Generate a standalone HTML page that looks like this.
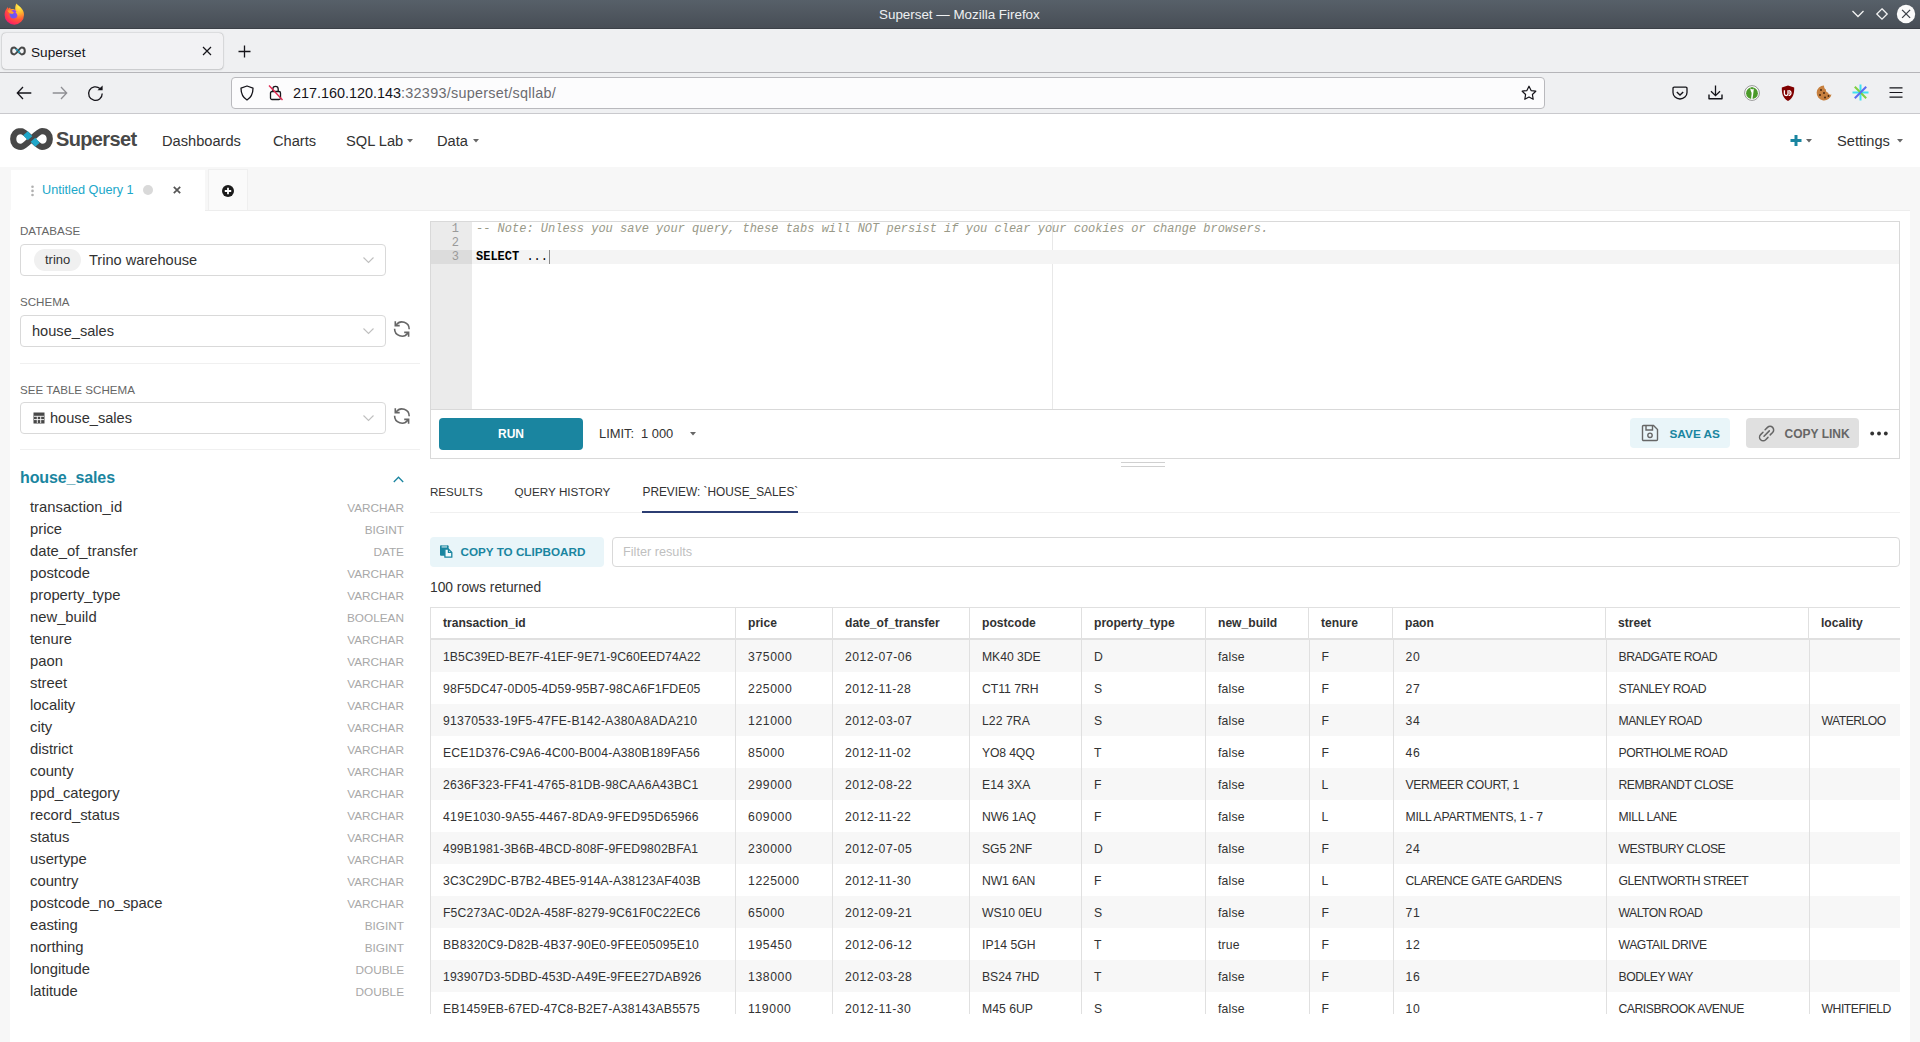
<!DOCTYPE html>
<html><head><meta charset="utf-8">
<style>
*{box-sizing:border-box;margin:0;padding:0}
html,body{width:1920px;height:1042px;overflow:hidden;background:#f7f7f7;font-family:"Liberation Sans",sans-serif;color:#323232}
.a{position:absolute}
.t{white-space:nowrap;line-height:1}
svg{overflow:visible}
</style></head><body>
<div class="a" style="left:0px;top:0px;width:1920px;height:29px;background:linear-gradient(#576069,#474d55)"></div><div class="a" style="left:0px;top:28px;width:1920px;height:1px;background:#3b4047"></div><div class="a t" style="left:879px;top:8.15px;font-size:13.4px;color:#eef0f2;font-weight:normal;">Superset — Mozilla Firefox</div><svg class="a" style="left:3px;top:2px" width="22" height="22" viewBox="0 0 22 22">
<defs>
<radialGradient id="ffg" cx="0.75" cy="0.15" r="1"><stop offset="0" stop-color="#fff44f"/><stop offset="0.3" stop-color="#ffb62e"/><stop offset="0.6" stop-color="#ff5a36"/><stop offset="0.85" stop-color="#ff2a5a"/><stop offset="1" stop-color="#e31587"/></radialGradient>
<radialGradient id="ffp" cx="0.35" cy="0.7" r="0.8"><stop offset="0" stop-color="#5b5ff0"/><stop offset="1" stop-color="#a03cf5"/></radialGradient>
</defs>
<path d="M13.3 1.6 C15 3.5 17.2 4.6 19 7 C20.6 9 21 11 21 13 A9.7 9.7 0 0 1 1.6 13 C1.6 10.5 2.3 8.5 3.6 6.8 L4.6 5 L5.4 6.8 L7 5.6 L7.8 7.2 C9.5 6.8 11 7.2 12.3 8 C12 5.5 12.4 3.5 13.3 1.6 Z" fill="url(#ffg)"/>
<circle cx="10.7" cy="12.2" r="4.2" fill="url(#ffp)"/>
<path d="M4.2 8.6 L7.8 8.2 L11 10.4 L9.5 12 L6.5 11.2 Z" fill="#ffa02e"/>
<path d="M14 8.5 C15.5 10 15.8 12.5 15 14.5 C14.5 12.5 13.5 11 12.5 10.5 Z" fill="#ffbd2e"/>
</svg><svg class="a" style="left:1852px;top:10px" width="12" height="8" viewBox="0 0 12 8"><path d="M0.5 1 L6 6.5 L11.5 1" fill="none" stroke="#f2f2f2" stroke-width="1.3"/></svg><svg class="a" style="left:1876px;top:8px" width="12" height="12" viewBox="0 0 12 12"><path d="M6 0.8 L11.2 6 L6 11.2 L0.8 6 Z" fill="none" stroke="#f2f2f2" stroke-width="1.3"/></svg><svg class="a" style="left:1896px;top:4px" width="20" height="20" viewBox="0 0 20 20"><circle cx="10" cy="10" r="9.2" fill="#fafafa"/><path d="M6.1 5.9 L14.1 13.9 M14.1 5.9 L6.1 13.9" stroke="#3b4047" stroke-width="1.3"/></svg><div class="a" style="left:0px;top:29px;width:1920px;height:43px;background:#eff0f2"></div><div class="a" style="left:0px;top:72px;width:1920px;height:1px;background:#b5b5b9"></div><div class="a" style="left:2px;top:33px;width:221px;height:36px;background:#f2f2f4;border-radius:4px;box-shadow:0 0 1.5px rgba(0,0,0,.4),0 1px 2px rgba(0,0,0,.1)"></div><svg class="a" style="left:10px;top:46px" width="16" height="10" viewBox="0 0 16 10"><path d="M4.2 1.6 C2 1.6 1.2 3.3 1.2 5 C1.2 6.7 2 8.4 4.2 8.4 C6.6 8.4 9.4 1.6 11.8 1.6 C14 1.6 14.8 3.3 14.8 5 C14.8 6.7 14 8.4 11.8 8.4 C9.4 8.4 6.6 1.6 4.2 1.6 Z" fill="none" stroke="#484848" stroke-width="2"/><path d="M6.2 3.1 L7.6 4.6" stroke="#20a7c9" stroke-width="2"/><path d="M8.4 5.4 L9.8 6.9" stroke="#20a7c9" stroke-width="2"/></svg><div class="a t" style="left:31px;top:45.78px;font-size:13.6px;color:#15141a;font-weight:normal;">Superset</div><svg class="a" style="left:202px;top:46px" width="10" height="10" viewBox="0 0 10 10"><path d="M1 1 L9 9 M9 1 L1 9" stroke="#15141a" stroke-width="1.2"/></svg><svg class="a" style="left:238px;top:45px" width="13" height="13" viewBox="0 0 13 13"><path d="M6.5 0.5 V12.5 M0.5 6.5 H12.5" stroke="#15141a" stroke-width="1.3"/></svg><div class="a" style="left:0px;top:73px;width:1920px;height:40px;background:#eff0f2"></div><div class="a" style="left:0px;top:113px;width:1920px;height:1px;background:#c9c9cd"></div><svg class="a" style="left:16px;top:86px" width="16" height="14" viewBox="0 0 16 14"><path d="M7 1 L1.3 7 L7 13 M1.3 7 H15.3" fill="none" stroke="#15141a" stroke-width="1.3"/></svg><svg class="a" style="left:52px;top:86px" width="16" height="14" viewBox="0 0 16 14"><path d="M9 1 L14.7 7 L9 13 M14.7 7 H0.7" fill="none" stroke="#8f8f94" stroke-width="1.3"/></svg><svg class="a" style="left:88px;top:86px" width="16" height="16" viewBox="0 0 16 16"><path d="M14.2 7.5 A6.8 6.8 0 1 1 12 2.6" fill="none" stroke="#15141a" stroke-width="1.3"/><path d="M9.5 4.3 L14.6 4.3 L14.6 -0.6 Z" fill="#15141a"/></svg><div class="a" style="left:231px;top:77px;width:1314px;height:32px;background:#fcfcfd;border:1px solid #b9b9bd;border-radius:4px"></div><svg class="a" style="left:240px;top:85px" width="14" height="16" viewBox="0 0 14 16"><path d="M7 1 L13 3.2 C13 9 11 12.5 7 15 C3 12.5 1 9 1 3.2 Z" fill="none" stroke="#15141a" stroke-width="1.3" stroke-linejoin="round"/></svg><svg class="a" style="left:268px;top:84px" width="16" height="17" viewBox="0 0 16 17"><rect x="2.5" y="7.5" width="10" height="8" rx="1.5" fill="none" stroke="#15141a" stroke-width="1.3"/><path d="M4.8 7.5 V5 A2.7 2.7 0 0 1 10.2 5 V7.5" fill="none" stroke="#15141a" stroke-width="1.3"/><path d="M1 1.5 L14.5 16" stroke="#e22850" stroke-width="1.4"/></svg><div class="a t" style="left:293px;top:86.01px;font-size:14.4px;color:#15141a;font-weight:normal;">217.160.120.143<span style="color:#6b6b70;letter-spacing:0.27px">:32393/superset/sqllab/</span></div><svg class="a" style="left:1521px;top:85px" width="16" height="16" viewBox="0 0 16 16"><path d="M8 1.2 L10.1 5.6 L14.8 6.2 L11.4 9.5 L12.2 14.3 L8 12 L3.8 14.3 L4.6 9.5 L1.2 6.2 L5.9 5.6 Z" fill="none" stroke="#15141a" stroke-width="1.2" stroke-linejoin="round"/></svg><svg class="a" style="left:1672px;top:86px" width="16" height="15" viewBox="0 0 16 15"><path d="M2.2 1.2 H13.8 A1.2 1.2 0 0 1 15 2.4 V6.5 A7 6.5 0 0 1 1 6.5 V2.4 A1.2 1.2 0 0 1 2.2 1.2 Z" fill="none" stroke="#15141a" stroke-width="1.3"/><path d="M4.8 6 L8 9 L11.2 6" fill="none" stroke="#15141a" stroke-width="1.4"/></svg><svg class="a" style="left:1708px;top:85px" width="15" height="15" viewBox="0 0 15 15"><path d="M7.5 0.5 V10.5 M3 6.2 L7.5 10.7 L12 6.2" fill="none" stroke="#15141a" stroke-width="1.3"/><path d="M1 9.5 V13.8 H14 V9.5" fill="none" stroke="#15141a" stroke-width="1.4" stroke-linejoin="round"/></svg><svg class="a" style="left:1744px;top:85px" width="16" height="16" viewBox="0 0 16 16"><circle cx="8" cy="8" r="7.4" fill="#fff" stroke="#8a8a8a" stroke-width="0.9"/><circle cx="8" cy="8.2" r="5.9" fill="#4b9a2a"/><path d="M6.2 3.2 C6.6 6 7.2 6.8 7.6 7.8 C7.8 9.5 7 12 7.2 14.2 H8.6 C8.6 12 9.2 10 9.2 9 C9.4 7.5 9.6 6 9.8 3.4 C9 4.6 7.2 4.6 6.2 3.2 Z" fill="#fff"/><circle cx="8" cy="3.2" r="0.9" fill="#4b9a2a"/></svg><svg class="a" style="left:1780px;top:85px" width="16" height="17" viewBox="0 0 16 17"><path d="M8 0.4 L14.2 2.4 C14.4 9 12.8 13.2 8 16 C3.2 13.2 1.6 9 1.8 2.4 Z" fill="#800000"/><path d="M4.4 5.2 V8.8 A1.8 1.8 0 0 0 8 8.8 V5.2" fill="none" stroke="#fff" stroke-width="1.3"/><path d="M8.6 5.6 A2.4 2.4 0 1 1 8.6 10.4" fill="none" stroke="#fff" stroke-width="1.3"/><circle cx="9.4" cy="8" r="0.8" fill="#fff"/></svg><svg class="a" style="left:1816px;top:85px" width="16" height="16" viewBox="0 0 16 16"><path d="M8 0.5 A7.5 7.5 0 1 0 15.5 9.5 C14 10 12 9 12 7.5 C10.5 7.5 9.5 6 10 4.5 C8.5 4 8 2 8 0.5 Z" fill="#c7803f"/><circle cx="5" cy="5" r="1" fill="#4a2a12"/><circle cx="4" cy="10" r="1" fill="#4a2a12"/><circle cx="8" cy="8" r="1" fill="#4a2a12"/><circle cx="9" cy="12.5" r="1" fill="#4a2a12"/><circle cx="12.5" cy="11" r="0.9" fill="#4a2a12"/></svg><svg class="a" style="left:1852px;top:84px" width="17" height="17" viewBox="0 0 17 17"><path d="M8.5 0.5 V16.5" stroke="#3fe1f0" stroke-width="2"/><path d="M0.5 8.5 H16.5" stroke="#3fe1f0" stroke-width="2"/><path d="M2.8 2.8 L14.2 14.2" stroke="#80d040" stroke-width="2"/><path d="M14.2 2.8 L2.8 14.2" stroke="#5b6bf0" stroke-width="2"/></svg><svg class="a" style="left:1889px;top:87px" width="14" height="11" viewBox="0 0 14 11"><path d="M0.5 0.8 H13.5 M0.5 5.5 H13.5 M0.5 10.2 H13.5" stroke="#15141a" stroke-width="1.2"/></svg><div class="a" style="left:0px;top:114px;width:1920px;height:53px;background:#fff"></div><svg class="a" style="left:10px;top:128px" width="43" height="22" viewBox="0 0 43 22"><path d="M11 3.2 C5.5 3.2 3.2 7 3.2 11 C3.2 15 5.5 18.8 11 18.8 C16.5 18.8 26.5 3.2 32 3.2 C37.5 3.2 39.8 7 39.8 11 C39.8 15 37.5 18.8 32 18.8 C26.5 18.8 16.5 3.2 11 3.2 Z" fill="none" stroke="#484848" stroke-width="6.2"/><path d="M15.5 5.2 L20 10.2" stroke="#20a7c9" stroke-width="6.2"/><path d="M23 11.8 L27.5 16.8" stroke="#20a7c9" stroke-width="6.2"/></svg><div class="a t" style="left:56px;top:129.07px;font-size:20px;color:#484848;font-weight:bold;letter-spacing:-0.65px">Superset</div><div class="a t" style="left:162px;top:133.60px;font-size:14.65px;color:#323232;font-weight:normal;">Dashboards</div><div class="a t" style="left:273px;top:133.60px;font-size:14.65px;color:#323232;font-weight:normal;">Charts</div><div class="a t" style="left:346px;top:133.60px;font-size:14.65px;color:#323232;font-weight:normal;">SQL Lab</div><div class="a t" style="left:437px;top:133.60px;font-size:14.65px;color:#323232;font-weight:normal;">Data</div><div class="a t" style="left:1837px;top:133.60px;font-size:14.65px;color:#323232;font-weight:normal;">Settings</div><svg class="a" style="left:407px;top:139px" width="6" height="4" viewBox="0 0 6 4"><path d="M0 0 H6 L3 3.5 Z" fill="#666"/></svg><svg class="a" style="left:473px;top:139px" width="6" height="4" viewBox="0 0 6 4"><path d="M0 0 H6 L3 3.5 Z" fill="#666"/></svg><svg class="a" style="left:1806px;top:139px" width="6" height="4" viewBox="0 0 6 4"><path d="M0 0 H6 L3 3.5 Z" fill="#666"/></svg><svg class="a" style="left:1897px;top:139px" width="6" height="4" viewBox="0 0 6 4"><path d="M0 0 H6 L3 3.5 Z" fill="#666"/></svg><svg class="a" style="left:1790px;top:135px" width="12" height="11" viewBox="0 0 12 11"><path d="M6 0 V11 M0.5 5.5 H11.5" stroke="#1a85a0" stroke-width="3"/></svg><div class="a" style="left:11px;top:170px;width:194px;height:41px;background:#fff"></div><div class="a" style="left:208px;top:169px;width:40px;height:41px;background:#fafafa;border:1px solid #efefef;border-bottom:none"></div><svg class="a" style="left:30px;top:185px" width="5" height="12" viewBox="0 0 5 12"><circle cx="2.5" cy="1.8" r="1.3" fill="#b0b0b0"/><circle cx="2.5" cy="5.9" r="1.3" fill="#b0b0b0"/><circle cx="2.5" cy="10" r="1.3" fill="#b0b0b0"/></svg><div class="a t" style="left:42px;top:183.85px;font-size:12.7px;color:#20a7c9;font-weight:normal;">Untitled Query 1</div><svg class="a" style="left:143px;top:185px" width="10" height="10" viewBox="0 0 10 10"><circle cx="5" cy="5" r="5" fill="#d9d9d9"/></svg><svg class="a" style="left:173px;top:186px" width="8" height="8" viewBox="0 0 8 8"><path d="M0.8 0.8 L7.2 7.2 M7.2 0.8 L0.8 7.2" stroke="#555" stroke-width="1.7"/></svg><svg class="a" style="left:222px;top:185px" width="12" height="12" viewBox="0 0 12 12"><circle cx="6" cy="6" r="6" fill="#1b1b1b"/><path d="M6 2.8 V9.2 M2.8 6 H9.2" stroke="#fff" stroke-width="1.8"/></svg><div class="a" style="left:10px;top:210px;width:1900px;height:832px;background:#fff"></div><div class="a" style="left:205px;top:210px;width:1705px;height:1px;background:#ededed"></div><div class="a t" style="left:20px;top:225.08px;font-size:11.6px;color:#666;font-weight:normal;">DATABASE</div><div class="a" style="left:20px;top:244px;width:366px;height:32px;border:1px solid #d9d9d9;border-radius:4px;background:#fff"></div><div class="a" style="left:34px;top:249px;width:47px;height:22px;background:#f0f0f0;border-radius:11px"></div><div class="a t" style="left:45px;top:253.29px;font-size:13px;color:#323232;font-weight:normal;">trino</div><div class="a t" style="left:89px;top:252.94px;font-size:14.6px;color:#323232;font-weight:normal;">Trino warehouse</div><svg class="a" style="left:363px;top:257px" width="11" height="6" viewBox="0 0 11 6"><path d="M0.5 0.5 L5.5 5.5 L10.5 0.5" fill="none" stroke="#bfbfbf" stroke-width="1.1"/></svg><div class="a t" style="left:20px;top:296.48px;font-size:11.6px;color:#666;font-weight:normal;">SCHEMA</div><div class="a" style="left:20px;top:315px;width:366px;height:32px;border:1px solid #d9d9d9;border-radius:4px;background:#fff"></div><div class="a t" style="left:32px;top:323.94px;font-size:14.6px;color:#323232;font-weight:normal;">house_sales</div><svg class="a" style="left:363px;top:328px" width="11" height="6" viewBox="0 0 11 6"><path d="M0.5 0.5 L5.5 5.5 L10.5 0.5" fill="none" stroke="#bfbfbf" stroke-width="1.1"/></svg><svg class="a" style="left:390px;top:317px" width="24" height="24" viewBox="0 0 24 24"><g fill="none" stroke="#666" stroke-width="1.6"><path d="M6.2 7.9 A7.2 7.2 0 0 1 19.2 12.2"/><path d="M5.3 4.2 V8.6 H9.7"/><path d="M4.6 11.8 A7.3 7.3 0 0 0 17.9 16"/><path d="M14.2 15.4 H18.6 V19.8"/></g></svg><div class="a" style="left:20px;top:363px;width:400px;height:1px;background:#f0f0f0"></div><div class="a t" style="left:20px;top:383.78px;font-size:11.6px;color:#666;font-weight:normal;">SEE TABLE SCHEMA</div><div class="a" style="left:20px;top:402px;width:366px;height:32px;border:1px solid #d9d9d9;border-radius:4px;background:#fff"></div><svg class="a" style="left:33px;top:412px" width="12" height="12" viewBox="0 0 12 12"><rect x="0.5" y="0.5" width="11" height="11" fill="#484848"/><path d="M1 4.3 H11 M1 7.6 H11 M4.3 4.3 V11 M7.7 4.3 V11" stroke="#fff" stroke-width="0.9"/></svg><div class="a t" style="left:50px;top:410.94px;font-size:14.6px;color:#323232;font-weight:normal;">house_sales</div><svg class="a" style="left:363px;top:415px" width="11" height="6" viewBox="0 0 11 6"><path d="M0.5 0.5 L5.5 5.5 L10.5 0.5" fill="none" stroke="#bfbfbf" stroke-width="1.1"/></svg><svg class="a" style="left:390px;top:404px" width="24" height="24" viewBox="0 0 24 24"><g fill="none" stroke="#666" stroke-width="1.6"><path d="M6.2 7.9 A7.2 7.2 0 0 1 19.2 12.2"/><path d="M5.3 4.2 V8.6 H9.7"/><path d="M4.6 11.8 A7.3 7.3 0 0 0 17.9 16"/><path d="M14.2 15.4 H18.6 V19.8"/></g></svg><div class="a" style="left:20px;top:449px;width:400px;height:1px;background:#f0f0f0"></div><div class="a t" style="left:20px;top:470.45px;font-size:16px;color:#1a85a0;font-weight:600;letter-spacing:-0.1px">house_sales</div><svg class="a" style="left:393px;top:476px" width="11" height="7" viewBox="0 0 11 7"><path d="M0.8 6 L5.5 1.2 L10.2 6" fill="none" stroke="#1a85a0" stroke-width="1.3"/></svg><div class="a t" style="left:30px;top:500.27px;font-size:14.8px;color:#323232;font-weight:normal;">transaction_id</div><div class="a t" style="right:1516px;top:502.81px;font-size:11.8px;color:#a8a8a8;font-weight:normal;">VARCHAR</div><div class="a t" style="left:30px;top:522.27px;font-size:14.8px;color:#323232;font-weight:normal;">price</div><div class="a t" style="right:1516px;top:524.81px;font-size:11.8px;color:#a8a8a8;font-weight:normal;">BIGINT</div><div class="a t" style="left:30px;top:544.27px;font-size:14.8px;color:#323232;font-weight:normal;">date_of_transfer</div><div class="a t" style="right:1516px;top:546.81px;font-size:11.8px;color:#a8a8a8;font-weight:normal;">DATE</div><div class="a t" style="left:30px;top:566.27px;font-size:14.8px;color:#323232;font-weight:normal;">postcode</div><div class="a t" style="right:1516px;top:568.81px;font-size:11.8px;color:#a8a8a8;font-weight:normal;">VARCHAR</div><div class="a t" style="left:30px;top:588.27px;font-size:14.8px;color:#323232;font-weight:normal;">property_type</div><div class="a t" style="right:1516px;top:590.81px;font-size:11.8px;color:#a8a8a8;font-weight:normal;">VARCHAR</div><div class="a t" style="left:30px;top:610.27px;font-size:14.8px;color:#323232;font-weight:normal;">new_build</div><div class="a t" style="right:1516px;top:612.81px;font-size:11.8px;color:#a8a8a8;font-weight:normal;">BOOLEAN</div><div class="a t" style="left:30px;top:632.27px;font-size:14.8px;color:#323232;font-weight:normal;">tenure</div><div class="a t" style="right:1516px;top:634.81px;font-size:11.8px;color:#a8a8a8;font-weight:normal;">VARCHAR</div><div class="a t" style="left:30px;top:654.27px;font-size:14.8px;color:#323232;font-weight:normal;">paon</div><div class="a t" style="right:1516px;top:656.81px;font-size:11.8px;color:#a8a8a8;font-weight:normal;">VARCHAR</div><div class="a t" style="left:30px;top:676.27px;font-size:14.8px;color:#323232;font-weight:normal;">street</div><div class="a t" style="right:1516px;top:678.81px;font-size:11.8px;color:#a8a8a8;font-weight:normal;">VARCHAR</div><div class="a t" style="left:30px;top:698.27px;font-size:14.8px;color:#323232;font-weight:normal;">locality</div><div class="a t" style="right:1516px;top:700.81px;font-size:11.8px;color:#a8a8a8;font-weight:normal;">VARCHAR</div><div class="a t" style="left:30px;top:720.27px;font-size:14.8px;color:#323232;font-weight:normal;">city</div><div class="a t" style="right:1516px;top:722.81px;font-size:11.8px;color:#a8a8a8;font-weight:normal;">VARCHAR</div><div class="a t" style="left:30px;top:742.27px;font-size:14.8px;color:#323232;font-weight:normal;">district</div><div class="a t" style="right:1516px;top:744.81px;font-size:11.8px;color:#a8a8a8;font-weight:normal;">VARCHAR</div><div class="a t" style="left:30px;top:764.27px;font-size:14.8px;color:#323232;font-weight:normal;">county</div><div class="a t" style="right:1516px;top:766.81px;font-size:11.8px;color:#a8a8a8;font-weight:normal;">VARCHAR</div><div class="a t" style="left:30px;top:786.27px;font-size:14.8px;color:#323232;font-weight:normal;">ppd_category</div><div class="a t" style="right:1516px;top:788.81px;font-size:11.8px;color:#a8a8a8;font-weight:normal;">VARCHAR</div><div class="a t" style="left:30px;top:808.27px;font-size:14.8px;color:#323232;font-weight:normal;">record_status</div><div class="a t" style="right:1516px;top:810.81px;font-size:11.8px;color:#a8a8a8;font-weight:normal;">VARCHAR</div><div class="a t" style="left:30px;top:830.27px;font-size:14.8px;color:#323232;font-weight:normal;">status</div><div class="a t" style="right:1516px;top:832.81px;font-size:11.8px;color:#a8a8a8;font-weight:normal;">VARCHAR</div><div class="a t" style="left:30px;top:852.27px;font-size:14.8px;color:#323232;font-weight:normal;">usertype</div><div class="a t" style="right:1516px;top:854.81px;font-size:11.8px;color:#a8a8a8;font-weight:normal;">VARCHAR</div><div class="a t" style="left:30px;top:874.27px;font-size:14.8px;color:#323232;font-weight:normal;">country</div><div class="a t" style="right:1516px;top:876.81px;font-size:11.8px;color:#a8a8a8;font-weight:normal;">VARCHAR</div><div class="a t" style="left:30px;top:896.27px;font-size:14.8px;color:#323232;font-weight:normal;">postcode_no_space</div><div class="a t" style="right:1516px;top:898.81px;font-size:11.8px;color:#a8a8a8;font-weight:normal;">VARCHAR</div><div class="a t" style="left:30px;top:918.27px;font-size:14.8px;color:#323232;font-weight:normal;">easting</div><div class="a t" style="right:1516px;top:920.81px;font-size:11.8px;color:#a8a8a8;font-weight:normal;">BIGINT</div><div class="a t" style="left:30px;top:940.27px;font-size:14.8px;color:#323232;font-weight:normal;">northing</div><div class="a t" style="right:1516px;top:942.81px;font-size:11.8px;color:#a8a8a8;font-weight:normal;">BIGINT</div><div class="a t" style="left:30px;top:962.27px;font-size:14.8px;color:#323232;font-weight:normal;">longitude</div><div class="a t" style="right:1516px;top:964.81px;font-size:11.8px;color:#a8a8a8;font-weight:normal;">DOUBLE</div><div class="a t" style="left:30px;top:984.27px;font-size:14.8px;color:#323232;font-weight:normal;">latitude</div><div class="a t" style="right:1516px;top:986.81px;font-size:11.8px;color:#a8a8a8;font-weight:normal;">DOUBLE</div><div class="a" style="left:430px;top:221px;width:1470px;height:238px;border:1px solid #d9d9d9;background:#fff"></div><div class="a" style="left:431px;top:222px;width:41px;height:187px;background:#ebebeb"></div><div class="a" style="left:472px;top:250px;width:1427px;height:14px;background:#f4f4f4"></div><div class="a" style="left:431px;top:250px;width:41px;height:14px;background:#dcdcdc"></div><div class="a" style="left:1052px;top:222px;width:1px;height:187px;background:#e8e8e8"></div><div class="a" style="left:1052px;top:250px;width:1px;height:14px;background:#f4f4f4"></div><div class="a t" style="right:1461px;top:222.81px;font-size:12px;color:#9a9a9a;font-weight:normal;font-family:'Liberation Mono',monospace;">1</div><div class="a t" style="right:1461px;top:236.81px;font-size:12px;color:#9a9a9a;font-weight:normal;font-family:'Liberation Mono',monospace;">2</div><div class="a t" style="right:1461px;top:250.81px;font-size:12px;color:#9a9a9a;font-weight:normal;font-family:'Liberation Mono',monospace;">3</div><div class="a t" style="left:476px;top:222.81px;font-size:12px;color:#999988;font-weight:normal;font-family:'Liberation Mono',monospace;font-style:italic">-- Note: Unless you save your query, these tabs will NOT persist if you clear your cookies or change browsers.</div><div class="a t" style="left:476px;top:250.81px;font-size:12px;color:#000;font-weight:bold;font-family:'Liberation Mono',monospace;">SELECT</div><div class="a t" style="left:526.4px;top:250.81px;font-size:12px;color:#000;font-weight:normal;font-family:'Liberation Mono',monospace;">...</div><div class="a" style="left:549px;top:250px;width:1px;height:14px;background:#8a8a8a"></div><div class="a" style="left:431px;top:409px;width:1468px;height:1px;background:#d9d9d9"></div><div class="a" style="left:439px;top:418px;width:144px;height:32px;background:#1a85a0;border-radius:4px"></div><div class="a t" style="left:498px;top:427.84px;font-size:12px;color:#fff;font-weight:bold;">RUN</div><div class="a t" style="left:599px;top:427.58px;font-size:12.9px;color:#323232;font-weight:normal;">LIMIT:</div><div class="a t" style="left:641px;top:427.58px;font-size:12.9px;color:#323232;font-weight:normal;">1 000</div><svg class="a" style="left:690px;top:432px" width="6" height="4" viewBox="0 0 6 4"><path d="M0 0 H6 L3 3.5 Z" fill="#666"/></svg><div class="a" style="left:1630px;top:418px;width:100px;height:30px;background:#e9f5f9;border-radius:4px"></div><svg class="a" style="left:1641px;top:424px" width="18" height="18" viewBox="0 0 18 18"><path d="M1.5 2.5 A1 1 0 0 1 2.5 1.5 H12.5 L16.5 5.5 V15.5 A1 1 0 0 1 15.5 16.5 H2.5 A1 1 0 0 1 1.5 15.5 Z" fill="none" stroke="#666" stroke-width="1.4"/><path d="M5 1.8 V6 H11.5 V1.8" fill="none" stroke="#666" stroke-width="1.4"/><circle cx="9" cy="11.3" r="2.2" fill="none" stroke="#666" stroke-width="1.4"/></svg><div class="a t" style="left:1669.5px;top:428.51px;font-size:11.8px;color:#1a85a0;font-weight:bold;">SAVE AS</div><div class="a" style="left:1746px;top:418px;width:113px;height:30px;background:#e0e0e0;border-radius:4px"></div><svg class="a" style="left:1752px;top:420px" width="28" height="26" viewBox="0 0 28 26"><g fill="none" stroke="#666" stroke-width="1.5" stroke-linecap="round"><path d="M13.1 9.8 L15.5 7.4 A3.6 3.6 0 0 1 20.6 12.5 L18.2 14.9"/><path d="M11 12.2 L8.6 14.6 A3.6 3.6 0 0 0 13.7 19.7 L16 17.4"/><path d="M12 16.3 L17.3 10.9"/></g></svg><div class="a t" style="left:1784.5px;top:428.34px;font-size:12.0px;color:#666;font-weight:bold;">COPY LINK</div><svg class="a" style="left:1870px;top:431px" width="18" height="5" viewBox="0 0 18 5"><circle cx="2.2" cy="2.5" r="1.9" fill="#323232"/><circle cx="9" cy="2.5" r="1.9" fill="#323232"/><circle cx="15.8" cy="2.5" r="1.9" fill="#323232"/></svg><div class="a" style="left:1121px;top:462px;width:44px;height:1px;background:#d0d0d0"></div><div class="a" style="left:1121px;top:466px;width:44px;height:1px;background:#d0d0d0"></div><div class="a t" style="left:430px;top:486.48px;font-size:11.6px;color:#323232;font-weight:normal;">RESULTS</div><div class="a t" style="left:514.5px;top:486.39px;font-size:11.7px;color:#323232;font-weight:normal;">QUERY HISTORY</div><div class="a t" style="left:642.5px;top:487.27px;font-size:11.85px;color:#323232;font-weight:normal;">PREVIEW: `HOUSE_SALES`</div><div class="a" style="left:430px;top:512px;width:1470px;height:1px;background:#f0f0f0"></div><div class="a" style="left:642px;top:511px;width:156px;height:2px;background:#2c3e73"></div><div class="a" style="left:430px;top:537px;width:174px;height:30px;background:#e9f5f9;border-radius:4px"></div><svg class="a" style="left:434px;top:540px" width="26" height="24" viewBox="0 0 26 24"><rect x="6" y="5.2" width="8.6" height="10.6" rx="1" fill="#1a85a0"/><rect x="7.6" y="5.4" width="5.4" height="2.4" fill="#8cc2cf"/><path d="M10.9 9 H14.4 L17.8 12.4 V17.2 H10.9 Z" fill="#f4fbfd" stroke="#1a85a0" stroke-width="1.3" stroke-linejoin="round"/><path d="M14.4 9 V12.4 H17.8" fill="none" stroke="#1a85a0" stroke-width="1.2"/></svg><div class="a t" style="left:460.5px;top:545.59px;font-size:11.7px;color:#1a85a0;font-weight:bold;">COPY TO CLIPBOARD</div><div class="a" style="left:612px;top:537px;width:1288px;height:30px;border:1px solid #d9d9d9;border-radius:4px;background:#fff"></div><div class="a t" style="left:623px;top:546.25px;font-size:12.7px;color:#bfbfbf;font-weight:normal;">Filter results</div><div class="a t" style="left:430px;top:581.02px;font-size:13.8px;color:#323232;font-weight:normal;">100 rows returned</div><div class="a" style="left:430px;top:640px;width:1470px;height:374px;overflow:hidden"><div class="a" style="left:0;top:0px;width:1470px;height:32px;background:#f7f7f7"></div><div class="a" style="left:0;top:64px;width:1470px;height:32px;background:#f7f7f7"></div><div class="a" style="left:0;top:128px;width:1470px;height:32px;background:#f7f7f7"></div><div class="a" style="left:0;top:192px;width:1470px;height:32px;background:#f7f7f7"></div><div class="a" style="left:0;top:256px;width:1470px;height:32px;background:#f7f7f7"></div><div class="a" style="left:0;top:320px;width:1470px;height:32px;background:#f7f7f7"></div></div><div class="a" style="left:430px;top:607px;width:1470px;height:1px;background:#e0e0e0"></div><div class="a" style="left:430px;top:638px;width:1470px;height:2px;background:#e0e0e0"></div><div class="a" style="left:430px;top:607px;width:1px;height:407px;background:#e0e0e0"></div><div class="a" style="left:735px;top:608px;width:1px;height:30px;background:#e0e0e0"></div><div class="a" style="left:832px;top:608px;width:1px;height:30px;background:#e0e0e0"></div><div class="a" style="left:969px;top:608px;width:1px;height:30px;background:#e0e0e0"></div><div class="a" style="left:1081px;top:608px;width:1px;height:30px;background:#e0e0e0"></div><div class="a" style="left:1205px;top:608px;width:1px;height:30px;background:#e0e0e0"></div><div class="a" style="left:1308px;top:608px;width:1px;height:30px;background:#e0e0e0"></div><div class="a" style="left:1392px;top:608px;width:1px;height:30px;background:#e0e0e0"></div><div class="a" style="left:1605px;top:608px;width:1px;height:30px;background:#e0e0e0"></div><div class="a" style="left:1808px;top:608px;width:1px;height:30px;background:#e0e0e0"></div><div class="a" style="left:735px;top:640px;width:1px;height:374px;background:#e0e0e0"></div><div class="a" style="left:832px;top:640px;width:1px;height:374px;background:#e0e0e0"></div><div class="a" style="left:969px;top:640px;width:1px;height:374px;background:#e0e0e0"></div><div class="a" style="left:1081px;top:640px;width:1px;height:374px;background:#e0e0e0"></div><div class="a" style="left:1205px;top:640px;width:1px;height:374px;background:#e0e0e0"></div><div class="a" style="left:1309px;top:640px;width:1px;height:374px;background:#e0e0e0"></div><div class="a" style="left:1393px;top:640px;width:1px;height:374px;background:#e0e0e0"></div><div class="a" style="left:1606px;top:640px;width:1px;height:374px;background:#e0e0e0"></div><div class="a" style="left:1809px;top:640px;width:1px;height:374px;background:#e0e0e0"></div><div class="a t" style="left:443px;top:616.85px;font-size:12.1px;color:#323232;font-weight:bold;">transaction_id</div><div class="a t" style="left:748px;top:616.85px;font-size:12.1px;color:#323232;font-weight:bold;">price</div><div class="a t" style="left:845px;top:616.85px;font-size:12.1px;color:#323232;font-weight:bold;">date_of_transfer</div><div class="a t" style="left:982px;top:616.85px;font-size:12.1px;color:#323232;font-weight:bold;">postcode</div><div class="a t" style="left:1094px;top:616.85px;font-size:12.1px;color:#323232;font-weight:bold;">property_type</div><div class="a t" style="left:1218px;top:616.85px;font-size:12.1px;color:#323232;font-weight:bold;">new_build</div><div class="a t" style="left:1321px;top:616.85px;font-size:12.1px;color:#323232;font-weight:bold;">tenure</div><div class="a t" style="left:1405px;top:616.85px;font-size:12.1px;color:#323232;font-weight:bold;">paon</div><div class="a t" style="left:1618px;top:616.85px;font-size:12.1px;color:#323232;font-weight:bold;">street</div><div class="a t" style="left:1821px;top:616.85px;font-size:12.1px;color:#323232;font-weight:bold;">locality</div><div class="a" style="left:430px;top:640px;width:1470px;height:374px;overflow:hidden"><div class="a t" style="left:13px;top:11.07px;font-size:12.2px;letter-spacing:0.083px;color:#323232">1B5C39ED-BE7F-41EF-9E71-9C60EED74A22</div><div class="a t" style="left:318px;top:11.07px;font-size:12.2px;letter-spacing:0.611px;color:#323232">375000</div><div class="a t" style="left:415px;top:11.07px;font-size:12.2px;letter-spacing:0.489px;color:#323232">2012-07-06</div><div class="a t" style="left:552px;top:11.07px;font-size:12.2px;letter-spacing:-0.035px;color:#323232">MK40 3DE</div><div class="a t" style="left:664px;top:11.07px;font-size:12.2px;letter-spacing:-0.529px;color:#323232">D</div><div class="a t" style="left:788px;top:11.07px;font-size:12.2px;letter-spacing:0.206px;color:#323232">false</div><div class="a t" style="left:891.5px;top:11.07px;font-size:12.2px;letter-spacing:-0.447px;color:#323232">F</div><div class="a t" style="left:975.5px;top:11.07px;font-size:12.2px;letter-spacing:0.611px;color:#323232">20</div><div class="a t" style="left:1188.5px;top:11.07px;font-size:12.2px;letter-spacing:-0.472px;color:#323232">BRADGATE ROAD</div><div class="a t" style="left:13px;top:43.07px;font-size:12.2px;letter-spacing:0.173px;color:#323232">98F5DC47-0D05-4D59-95B7-98CA6F1FDE05</div><div class="a t" style="left:318px;top:43.07px;font-size:12.2px;letter-spacing:0.611px;color:#323232">225000</div><div class="a t" style="left:415px;top:43.07px;font-size:12.2px;letter-spacing:0.489px;color:#323232">2012-11-28</div><div class="a t" style="left:552px;top:43.07px;font-size:12.2px;letter-spacing:-0.025px;color:#323232">CT11 7RH</div><div class="a t" style="left:664px;top:43.07px;font-size:12.2px;letter-spacing:-0.488px;color:#323232">S</div><div class="a t" style="left:788px;top:43.07px;font-size:12.2px;letter-spacing:0.206px;color:#323232">false</div><div class="a t" style="left:891.5px;top:43.07px;font-size:12.2px;letter-spacing:-0.447px;color:#323232">F</div><div class="a t" style="left:975.5px;top:43.07px;font-size:12.2px;letter-spacing:0.611px;color:#323232">27</div><div class="a t" style="left:1188.5px;top:43.07px;font-size:12.2px;letter-spacing:-0.454px;color:#323232">STANLEY ROAD</div><div class="a t" style="left:13px;top:75.07px;font-size:12.2px;letter-spacing:0.269px;color:#323232">91370533-19F5-47FE-B142-A380A8ADA210</div><div class="a t" style="left:318px;top:75.07px;font-size:12.2px;letter-spacing:0.611px;color:#323232">121000</div><div class="a t" style="left:415px;top:75.07px;font-size:12.2px;letter-spacing:0.489px;color:#323232">2012-03-07</div><div class="a t" style="left:552px;top:75.07px;font-size:12.2px;letter-spacing:0.058px;color:#323232">L22 7RA</div><div class="a t" style="left:664px;top:75.07px;font-size:12.2px;letter-spacing:-0.488px;color:#323232">S</div><div class="a t" style="left:788px;top:75.07px;font-size:12.2px;letter-spacing:0.206px;color:#323232">false</div><div class="a t" style="left:891.5px;top:75.07px;font-size:12.2px;letter-spacing:-0.447px;color:#323232">F</div><div class="a t" style="left:975.5px;top:75.07px;font-size:12.2px;letter-spacing:0.611px;color:#323232">34</div><div class="a t" style="left:1188.5px;top:75.07px;font-size:12.2px;letter-spacing:-0.466px;color:#323232">MANLEY ROAD</div><div class="a t" style="left:1391.5px;top:75.07px;font-size:12.2px;letter-spacing:-0.524px;color:#323232">WATERLOO</div><div class="a t" style="left:13px;top:107.07px;font-size:12.2px;letter-spacing:0.173px;color:#323232">ECE1D376-C9A6-4C00-B004-A380B189FA56</div><div class="a t" style="left:318px;top:107.07px;font-size:12.2px;letter-spacing:0.611px;color:#323232">85000</div><div class="a t" style="left:415px;top:107.07px;font-size:12.2px;letter-spacing:0.489px;color:#323232">2012-11-02</div><div class="a t" style="left:552px;top:107.07px;font-size:12.2px;letter-spacing:-0.139px;color:#323232">YO8 4QQ</div><div class="a t" style="left:664px;top:107.07px;font-size:12.2px;letter-spacing:-0.447px;color:#323232">T</div><div class="a t" style="left:788px;top:107.07px;font-size:12.2px;letter-spacing:0.206px;color:#323232">false</div><div class="a t" style="left:891.5px;top:107.07px;font-size:12.2px;letter-spacing:-0.447px;color:#323232">F</div><div class="a t" style="left:975.5px;top:107.07px;font-size:12.2px;letter-spacing:0.611px;color:#323232">46</div><div class="a t" style="left:1188.5px;top:107.07px;font-size:12.2px;letter-spacing:-0.482px;color:#323232">PORTHOLME ROAD</div><div class="a t" style="left:13px;top:139.07px;font-size:12.2px;letter-spacing:0.207px;color:#323232">2636F323-FF41-4765-81DB-98CAA6A43BC1</div><div class="a t" style="left:318px;top:139.07px;font-size:12.2px;letter-spacing:0.611px;color:#323232">299000</div><div class="a t" style="left:415px;top:139.07px;font-size:12.2px;letter-spacing:0.489px;color:#323232">2012-08-22</div><div class="a t" style="left:552px;top:139.07px;font-size:12.2px;letter-spacing:0.052px;color:#323232">E14 3XA</div><div class="a t" style="left:664px;top:139.07px;font-size:12.2px;letter-spacing:-0.447px;color:#323232">F</div><div class="a t" style="left:788px;top:139.07px;font-size:12.2px;letter-spacing:0.206px;color:#323232">false</div><div class="a t" style="left:891.5px;top:139.07px;font-size:12.2px;letter-spacing:-0.407px;color:#323232">L</div><div class="a t" style="left:975.5px;top:139.07px;font-size:12.2px;letter-spacing:-0.351px;color:#323232">VERMEER COURT, 1</div><div class="a t" style="left:1188.5px;top:139.07px;font-size:12.2px;letter-spacing:-0.475px;color:#323232">REMBRANDT CLOSE</div><div class="a t" style="left:13px;top:171.07px;font-size:12.2px;letter-spacing:0.296px;color:#323232">419E1030-9A55-4467-8DA9-9FED95D65966</div><div class="a t" style="left:318px;top:171.07px;font-size:12.2px;letter-spacing:0.611px;color:#323232">609000</div><div class="a t" style="left:415px;top:171.07px;font-size:12.2px;letter-spacing:0.489px;color:#323232">2012-11-22</div><div class="a t" style="left:552px;top:171.07px;font-size:12.2px;letter-spacing:-0.151px;color:#323232">NW6 1AQ</div><div class="a t" style="left:664px;top:171.07px;font-size:12.2px;letter-spacing:-0.447px;color:#323232">F</div><div class="a t" style="left:788px;top:171.07px;font-size:12.2px;letter-spacing:0.206px;color:#323232">false</div><div class="a t" style="left:891.5px;top:171.07px;font-size:12.2px;letter-spacing:-0.407px;color:#323232">L</div><div class="a t" style="left:975.5px;top:171.07px;font-size:12.2px;letter-spacing:-0.246px;color:#323232">MILL APARTMENTS, 1 - 7</div><div class="a t" style="left:1188.5px;top:171.07px;font-size:12.2px;letter-spacing:-0.393px;color:#323232">MILL LANE</div><div class="a t" style="left:13px;top:203.07px;font-size:12.2px;letter-spacing:0.146px;color:#323232">499B1981-3B6B-4BCD-808F-9FED9802BFA1</div><div class="a t" style="left:318px;top:203.07px;font-size:12.2px;letter-spacing:0.611px;color:#323232">230000</div><div class="a t" style="left:415px;top:203.07px;font-size:12.2px;letter-spacing:0.489px;color:#323232">2012-07-05</div><div class="a t" style="left:552px;top:203.07px;font-size:12.2px;letter-spacing:-0.116px;color:#323232">SG5 2NF</div><div class="a t" style="left:664px;top:203.07px;font-size:12.2px;letter-spacing:-0.529px;color:#323232">D</div><div class="a t" style="left:788px;top:203.07px;font-size:12.2px;letter-spacing:0.206px;color:#323232">false</div><div class="a t" style="left:891.5px;top:203.07px;font-size:12.2px;letter-spacing:-0.447px;color:#323232">F</div><div class="a t" style="left:975.5px;top:203.07px;font-size:12.2px;letter-spacing:0.611px;color:#323232">24</div><div class="a t" style="left:1188.5px;top:203.07px;font-size:12.2px;letter-spacing:-0.474px;color:#323232">WESTBURY CLOSE</div><div class="a t" style="left:13px;top:235.07px;font-size:12.2px;letter-spacing:0.143px;color:#323232">3C3C29DC-B7B2-4BE5-914A-A38123AF403B</div><div class="a t" style="left:318px;top:235.07px;font-size:12.2px;letter-spacing:0.611px;color:#323232">1225000</div><div class="a t" style="left:415px;top:235.07px;font-size:12.2px;letter-spacing:0.489px;color:#323232">2012-11-30</div><div class="a t" style="left:552px;top:235.07px;font-size:12.2px;letter-spacing:-0.145px;color:#323232">NW1 6AN</div><div class="a t" style="left:664px;top:235.07px;font-size:12.2px;letter-spacing:-0.447px;color:#323232">F</div><div class="a t" style="left:788px;top:235.07px;font-size:12.2px;letter-spacing:0.206px;color:#323232">false</div><div class="a t" style="left:891.5px;top:235.07px;font-size:12.2px;letter-spacing:-0.407px;color:#323232">L</div><div class="a t" style="left:975.5px;top:235.07px;font-size:12.2px;letter-spacing:-0.457px;color:#323232">CLARENCE GATE GARDENS</div><div class="a t" style="left:1188.5px;top:235.07px;font-size:12.2px;letter-spacing:-0.476px;color:#323232">GLENTWORTH STREET</div><div class="a t" style="left:13px;top:267.07px;font-size:12.2px;letter-spacing:0.173px;color:#323232">F5C273AC-0D2A-458F-8279-9C61F0C22EC6</div><div class="a t" style="left:318px;top:267.07px;font-size:12.2px;letter-spacing:0.611px;color:#323232">65000</div><div class="a t" style="left:415px;top:267.07px;font-size:12.2px;letter-spacing:0.489px;color:#323232">2012-09-21</div><div class="a t" style="left:552px;top:267.07px;font-size:12.2px;letter-spacing:-0.046px;color:#323232">WS10 0EU</div><div class="a t" style="left:664px;top:267.07px;font-size:12.2px;letter-spacing:-0.488px;color:#323232">S</div><div class="a t" style="left:788px;top:267.07px;font-size:12.2px;letter-spacing:0.206px;color:#323232">false</div><div class="a t" style="left:891.5px;top:267.07px;font-size:12.2px;letter-spacing:-0.447px;color:#323232">F</div><div class="a t" style="left:975.5px;top:267.07px;font-size:12.2px;letter-spacing:0.611px;color:#323232">71</div><div class="a t" style="left:1188.5px;top:267.07px;font-size:12.2px;letter-spacing:-0.477px;color:#323232">WALTON ROAD</div><div class="a t" style="left:13px;top:299.07px;font-size:12.2px;letter-spacing:0.206px;color:#323232">BB8320C9-D82B-4B37-90E0-9FEE05095E10</div><div class="a t" style="left:318px;top:299.07px;font-size:12.2px;letter-spacing:0.611px;color:#323232">195450</div><div class="a t" style="left:415px;top:299.07px;font-size:12.2px;letter-spacing:0.489px;color:#323232">2012-06-12</div><div class="a t" style="left:552px;top:299.07px;font-size:12.2px;letter-spacing:0.005px;color:#323232">IP14 5GH</div><div class="a t" style="left:664px;top:299.07px;font-size:12.2px;letter-spacing:-0.447px;color:#323232">T</div><div class="a t" style="left:788px;top:299.07px;font-size:12.2px;letter-spacing:0.210px;color:#323232">true</div><div class="a t" style="left:891.5px;top:299.07px;font-size:12.2px;letter-spacing:-0.447px;color:#323232">F</div><div class="a t" style="left:975.5px;top:299.07px;font-size:12.2px;letter-spacing:0.611px;color:#323232">12</div><div class="a t" style="left:1188.5px;top:299.07px;font-size:12.2px;letter-spacing:-0.425px;color:#323232">WAGTAIL DRIVE</div><div class="a t" style="left:13px;top:331.07px;font-size:12.2px;letter-spacing:0.142px;color:#323232">193907D3-5DBD-453D-A49E-9FEE27DAB926</div><div class="a t" style="left:318px;top:331.07px;font-size:12.2px;letter-spacing:0.611px;color:#323232">138000</div><div class="a t" style="left:415px;top:331.07px;font-size:12.2px;letter-spacing:0.489px;color:#323232">2012-03-28</div><div class="a t" style="left:552px;top:331.07px;font-size:12.2px;letter-spacing:-0.025px;color:#323232">BS24 7HD</div><div class="a t" style="left:664px;top:331.07px;font-size:12.2px;letter-spacing:-0.447px;color:#323232">T</div><div class="a t" style="left:788px;top:331.07px;font-size:12.2px;letter-spacing:0.206px;color:#323232">false</div><div class="a t" style="left:891.5px;top:331.07px;font-size:12.2px;letter-spacing:-0.447px;color:#323232">F</div><div class="a t" style="left:975.5px;top:331.07px;font-size:12.2px;letter-spacing:0.611px;color:#323232">16</div><div class="a t" style="left:1188.5px;top:331.07px;font-size:12.2px;letter-spacing:-0.464px;color:#323232">BODLEY WAY</div><div class="a t" style="left:13px;top:363.07px;font-size:12.2px;letter-spacing:0.174px;color:#323232">EB1459EB-67ED-47C8-B2E7-A38143AB5575</div><div class="a t" style="left:318px;top:363.07px;font-size:12.2px;letter-spacing:0.611px;color:#323232">119000</div><div class="a t" style="left:415px;top:363.07px;font-size:12.2px;letter-spacing:0.489px;color:#323232">2012-11-30</div><div class="a t" style="left:552px;top:363.07px;font-size:12.2px;letter-spacing:0.029px;color:#323232">M45 6UP</div><div class="a t" style="left:664px;top:363.07px;font-size:12.2px;letter-spacing:-0.488px;color:#323232">S</div><div class="a t" style="left:788px;top:363.07px;font-size:12.2px;letter-spacing:0.206px;color:#323232">false</div><div class="a t" style="left:891.5px;top:363.07px;font-size:12.2px;letter-spacing:-0.447px;color:#323232">F</div><div class="a t" style="left:975.5px;top:363.07px;font-size:12.2px;letter-spacing:0.611px;color:#323232">10</div><div class="a t" style="left:1188.5px;top:363.07px;font-size:12.2px;letter-spacing:-0.464px;color:#323232">CARISBROOK AVENUE</div><div class="a t" style="left:1391.5px;top:363.07px;font-size:12.2px;letter-spacing:-0.443px;color:#323232">WHITEFIELD</div></div>
</body></html>
